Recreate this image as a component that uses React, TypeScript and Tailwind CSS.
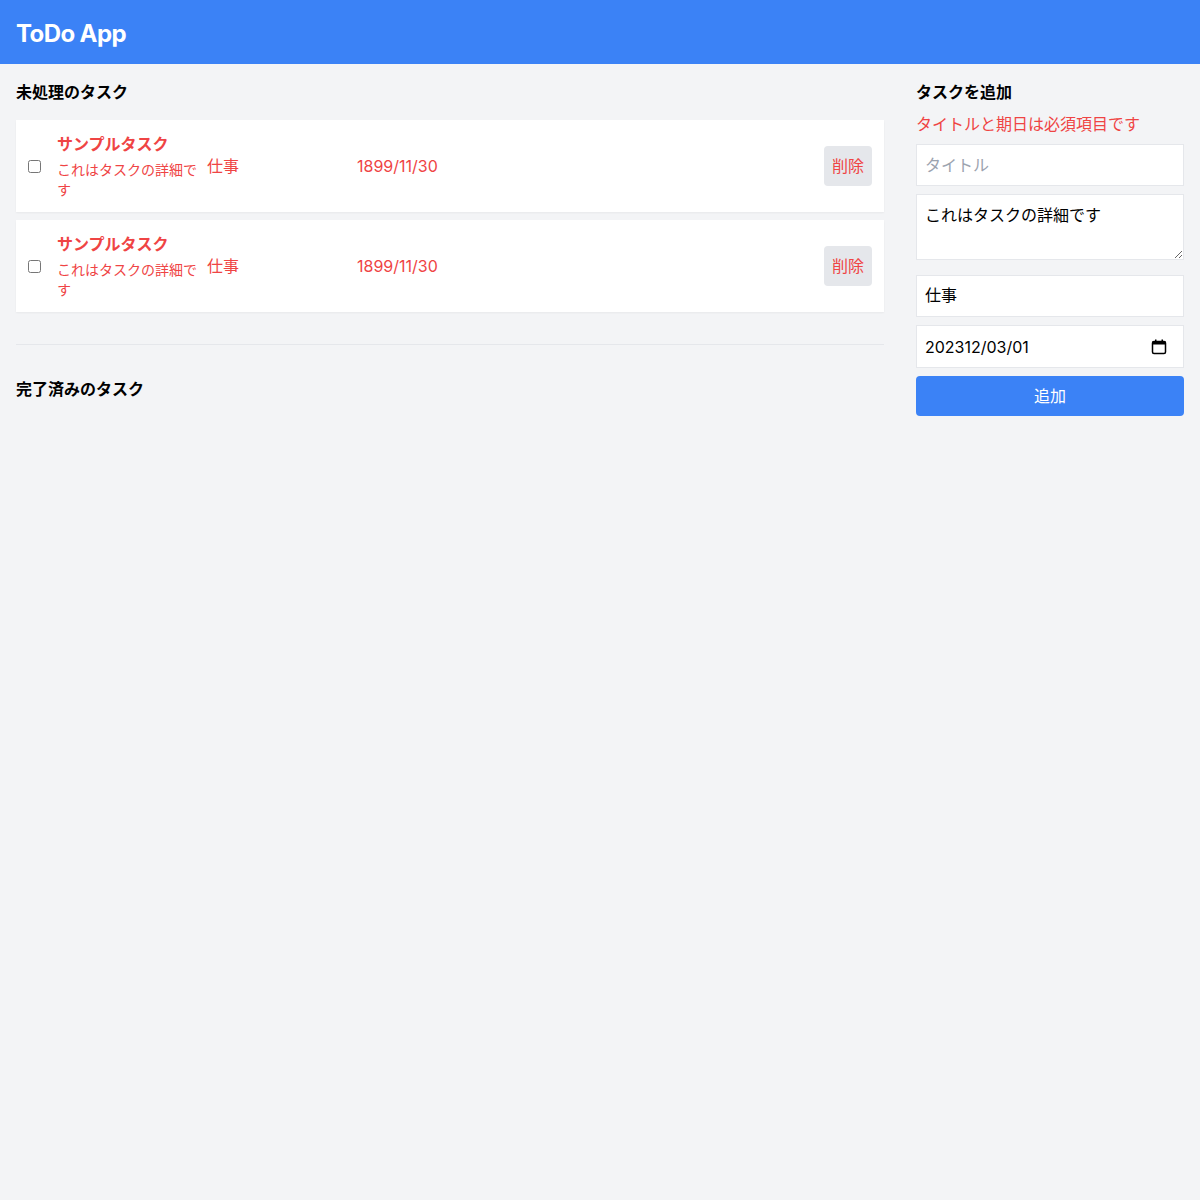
import React from "react"

type Task = {
    id: number
    title: string
    detail: string
    category: string
    due: string
}

const tasks: Task[] = [
    { id: 1, title: "サンプルタスク", detail: "これはタスクの詳細です", category: "仕事", due: "1899/11/30" },
    { id: 2, title: "サンプルタスク", detail: "これはタスクの詳細です", category: "仕事", due: "1899/11/30" },
]

const font = { fontFamily: '"Inter", "Noto Sans CJK JP", sans-serif' }

const TaskRow = ({ task }: { task: Task }) => (
    <div className="flex items-center bg-white p-3 shadow-[0_1px_2px_0_rgba(0,0,0,0.05)]">
        <input type="checkbox" className="m-0 h-[13px] w-[13px]" />
        <div className="ml-4 w-[142px]">
            <p className="m-0 text-base font-bold leading-6 text-[#ef4444]">{task.title}</p>
            <p className="m-0 mt-1 text-sm leading-5 text-[#ef4444]">{task.detail}</p>
        </div>
        <p className="m-0 ml-2 w-[150px] text-base text-[#ef4444]">{task.category}</p>
        <p className="m-0 text-base text-[#ef4444]">{task.due}</p>
        <button className="ml-auto h-10 rounded-sm bg-[#e5e7eb] px-2 text-base text-[#ef4444]">削除</button>
    </div>
)

export default function App() {
    return (
        <div className="min-h-[1200px] bg-[#f3f4f6]" style={font}>
            <header className="flex h-16 items-center bg-[#3b82f6] px-4 pt-1">
                <h1 className="text-2xl font-bold tracking-tight text-white">ToDo App</h1>
            </header>
            <main className="flex gap-8 p-4">
                <section className="w-[868px]">
                    <h2 className="mb-4 text-base font-bold leading-6 text-black">未処理のタスク</h2>
                    <div className="flex flex-col gap-2">
                        {tasks.map(t => <TaskRow key={t.id} task={t} />)}
                    </div>
                    <hr className="mt-8 border-[#e5e7eb]" />
                    <h2 className="mt-8 text-base font-bold leading-6 text-black">完了済みのタスク</h2>
                </section>
                <section className="flex w-[268px] flex-col">
                    <h2 className="mb-2 text-base font-bold leading-6 text-black">タスクを追加</h2>
                    <p className="mb-2 text-base leading-6 text-[#ef4444]">タイトルと期日は必須項目です</p>
                    <input
                        className="mb-2 h-[42px] border border-[#e5e7eb] bg-white px-2 text-base placeholder:text-[#9ca3af]"
                        placeholder="タイトル"
                    />
                    <textarea
                        className="mb-[15px] h-[66px] border border-[#e5e7eb] bg-white px-2 py-2 text-base leading-6 text-black"
                        defaultValue="これはタスクの詳細です"
                    />
                    <input
                        className="mb-2 h-[42px] border border-[#e5e7eb] bg-white px-2 pb-1 text-base text-black"
                        defaultValue="仕事"
                    />
                    <div className="relative mb-2 flex h-[43px] items-center border border-[#e5e7eb] bg-white px-2">
                        <span className="text-base text-black">202312/03/01</span>
                        <svg className="absolute right-4 h-4 w-4" viewBox="0 0 16 16" fill="none">
                            <rect x="1.5" y="2.5" width="13" height="12" rx="1.5" stroke="black" strokeWidth="1.5" />
                            <rect x="1.5" y="2.5" width="13" height="3" fill="black" />
                            <rect x="4" y="0.5" width="1.5" height="3" fill="black" />
                            <rect x="10.5" y="0.5" width="1.5" height="3" fill="black" />
                        </svg>
                    </div>
                    <button className="h-10 rounded-sm bg-[#3b82f6] text-base text-white">追加</button>
                </section>
            </main>
        </div>
    )
}
